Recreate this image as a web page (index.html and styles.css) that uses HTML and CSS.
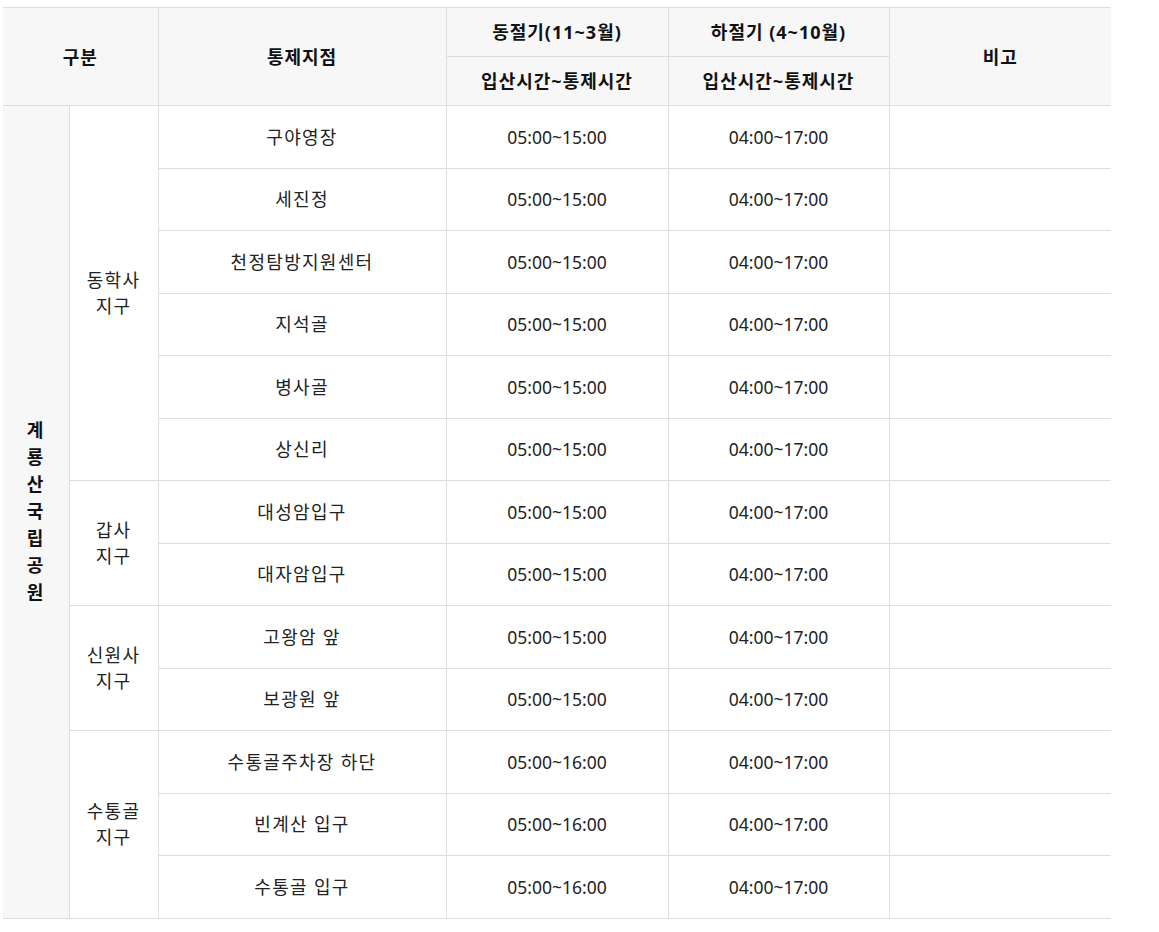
FILE: index.html
```html
<!DOCTYPE html>
<html lang="ko">
<head>
<meta charset="utf-8">
<title>통제지점</title>
<link rel="stylesheet" href="styles.css">
</head>
<body>
<table class="tbl">
  <colgroup>
    <col class="c1"><col class="c2"><col class="c3"><col class="c4"><col class="c5"><col class="c6">
  </colgroup>
  <thead>
    <tr class="h1">
      <th colspan="2" rowspan="2">구분</th>
      <th rowspan="2">통제지점</th>
      <th>동절기(11~3월)</th>
      <th>하절기 (4~10월)</th>
      <th rowspan="2">비고</th>
    </tr>
    <tr class="h2">
      <th>입산시간~통제시간</th>
      <th>입산시간~통제시간</th>
    </tr>
  </thead>
  <tbody>
    <tr>
      <th rowspan="13" class="park">계<br>룡<br>산<br>국<br>립<br>공<br>원</th>
      <td rowspan="6" class="zone">동학사<br>지구</td>
      <td>구야영장</td><td class="num">05:00~15:00</td><td class="num">04:00~17:00</td><td></td>
    </tr>
    <tr><td>세진정</td><td class="num">05:00~15:00</td><td class="num">04:00~17:00</td><td></td></tr>
    <tr><td>천정탐방지원센터</td><td class="num">05:00~15:00</td><td class="num">04:00~17:00</td><td></td></tr>
    <tr><td>지석골</td><td class="num">05:00~15:00</td><td class="num">04:00~17:00</td><td></td></tr>
    <tr><td>병사골</td><td class="num">05:00~15:00</td><td class="num">04:00~17:00</td><td></td></tr>
    <tr><td>상신리</td><td class="num">05:00~15:00</td><td class="num">04:00~17:00</td><td></td></tr>
    <tr>
      <td rowspan="2" class="zone">갑사<br>지구</td>
      <td>대성암입구</td><td class="num">05:00~15:00</td><td class="num">04:00~17:00</td><td></td>
    </tr>
    <tr><td>대자암입구</td><td class="num">05:00~15:00</td><td class="num">04:00~17:00</td><td></td></tr>
    <tr>
      <td rowspan="2" class="zone">신원사<br>지구</td>
      <td>고왕암 앞</td><td class="num">05:00~15:00</td><td class="num">04:00~17:00</td><td></td>
    </tr>
    <tr><td>보광원 앞</td><td class="num">05:00~15:00</td><td class="num">04:00~17:00</td><td></td></tr>
    <tr>
      <td rowspan="3" class="zone">수통골<br>지구</td>
      <td>수통골주차장 하단</td><td class="num">05:00~16:00</td><td class="num">04:00~17:00</td><td></td>
    </tr>
    <tr><td>빈계산 입구</td><td class="num">05:00~16:00</td><td class="num">04:00~17:00</td><td></td></tr>
    <tr><td>수통골 입구</td><td class="num">05:00~16:00</td><td class="num">04:00~17:00</td><td></td></tr>
  </tbody>
</table>
</body>
</html>
```
FILE: styles.css
```css
html, body {
  margin: 0;
  padding: 0;
  background: #fff;
}
body {
  padding: 7px 0 0 3px;
  font-family: "Noto Sans", "Noto Sans CJK KR", sans-serif;
  font-size: 18px;
  color: #222;
}
.tbl {
  border-collapse: collapse;
  table-layout: fixed;
  width: 1108px;
  border-top: 1px solid #6bb37c;
}
.c1 { width: 66px; }
.c2 { width: 89px; }
.c3 { width: 288px; }
.c4 { width: 222px; }
.c5 { width: 221px; }
.c6 { width: 222px; }
.tbl th,
.tbl td {
  border: 1px solid #dddddd;
  padding: 0;
  text-align: center;
  vertical-align: middle;
  line-height: 26px;
  letter-spacing: 1.3px;
}
.tbl tr > :first-child { border-left: none; }
.tbl tr > :last-child { border-right: none; }
.tbl thead th {
  background: #f7f7f7;
  font-weight: bold;
  color: #111;
  height: 48px;
  letter-spacing: 1px;
}
.tbl tbody td {
  height: 61.5px;
}
.tbl .num {
  font-size: 17.5px;
  letter-spacing: 0;
}
.tbl .park {
  background: #f7f7f7;
  font-weight: bold;
  color: #111;
  line-height: 27px;
  border-left: none;
}
```
